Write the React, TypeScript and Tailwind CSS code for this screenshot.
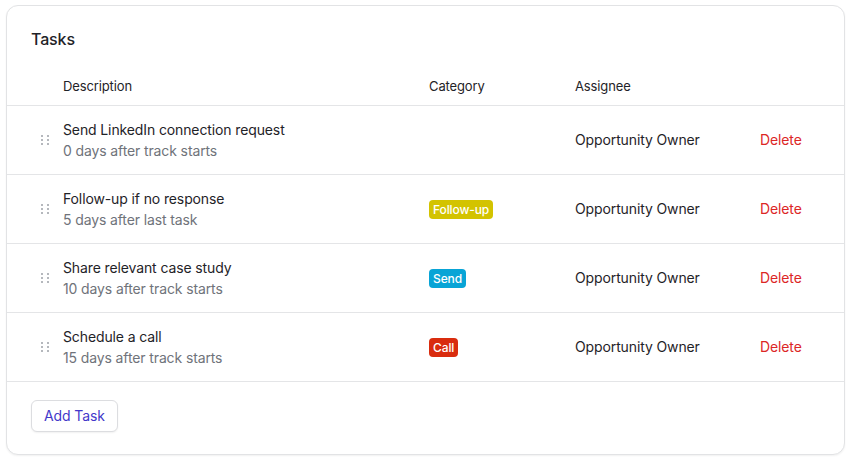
import React from "react";

type Task = {
  title: string;
  delay: string;
  category?: { label: string; color: string };
};

const tasks: Task[] = [
  { title: "Send LinkedIn connection request", delay: "0 days after track starts" },
  {
    title: "Follow-up if no response",
    delay: "5 days after last task",
    category: { label: "Follow-up", color: "bg-[#d3c300]" },
  },
  {
    title: "Share relevant case study",
    delay: "10 days after track starts",
    category: { label: "Send", color: "bg-[#08a4d6]" },
  },
  {
    title: "Schedule a call",
    delay: "15 days after track starts",
    category: { label: "Call", color: "bg-[#d92c0e]" },
  },
];

const cols = "grid grid-cols-[56px_366px_146px_185px_1fr] items-center";

function DragHandle() {
  return (
    <svg width="10" height="12" viewBox="0 0 10 12" className="ml-[33px] fill-[#b5b8bd]">
      {[0, 4, 8].map((y) =>
        [0, 6].map((x) => <rect key={`${x}-${y}`} x={x + 1} y={y + 1} width="2" height="2" />)
      )}
    </svg>
  );
}

export default function App() {
  return (
    <div
      className="min-h-screen bg-white px-[6px] pt-[5px] text-[#1f2328] tracking-[-0.12px]"
      style={{ fontFamily: "Inter, 'Noto Sans', sans-serif" }}
    >
      <div className="rounded-[12px] border border-[#e2e3e5] bg-white shadow-[0_1px_2px_rgba(0,0,0,0.06)] pt-[21px] pb-[22px]">
        <h2 className="px-6 text-base leading-6 font-medium">Tasks</h2>

        <div className={`${cols} mt-[17px] h-[38px] border-b border-[#e4e5e7] text-[13px]`}>
          <div />
          <div>Description</div>
          <div>Category</div>
          <div>Assignee</div>
          <div />
        </div>

        {tasks.map((t) => (
          <div key={t.title} className={`${cols} h-[69px] border-b border-[#e4e5e7] text-sm`}>
            <DragHandle />
            <div className="leading-[21px]">
              <div>{t.title}</div>
              <div className="text-[#6f737a]">{t.delay}</div>
            </div>
            <div>
              {t.category && (
                <span
                  className={`${t.category.color} inline-flex h-[19px] items-center rounded-[4px] px-[4px] text-xs font-medium text-white`}
                >
                  {t.category.label}
                </span>
              )}
            </div>
            <div>Opportunity Owner</div>
            <div className="text-[#dc2626]">Delete</div>
          </div>
        ))}

        <div className="px-6 pt-[18px]">
          <button className="h-8 rounded-[6px] border border-[#dcdde0] bg-white px-3 text-sm text-[#4338ca] shadow-[0_1px_2px_rgba(0,0,0,0.06)]">
            Add Task
          </button>
        </div>
      </div>
    </div>
  );
}
